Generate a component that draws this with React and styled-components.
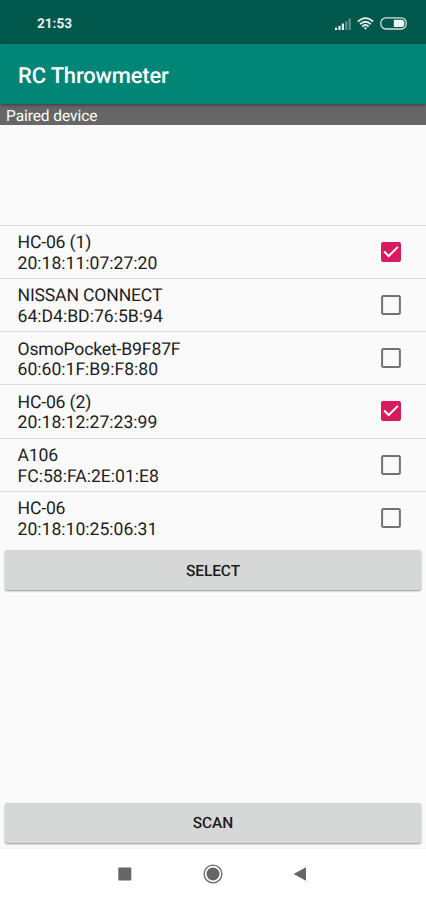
import React from 'react';
import styled, { createGlobalStyle } from 'styled-components';

const GlobalStyle = createGlobalStyle`
  * { box-sizing: border-box; }
  body {
    margin: 0;
    background: #fafafa;
    font-family: Roboto, sans-serif;
    text-rendering: geometricPrecision;
  }
`;

const Screen = styled.div`
  width: 426px;
  height: 900px;
  display: flex;
  flex-direction: column;
  overflow: hidden;
  background: #fafafa;
  color: #1d1d1d;
`;

const StatusBar = styled.header`
  height: 44px;
  flex: none;
  display: flex;
  align-items: center;
  justify-content: space-between;
  padding: 3px 19px 0 37px;
  background: #00574b;
  color: #e9f1f0;
`;

const Clock = styled.span`
  font-size: 13.6px;
  font-weight: 700;
  line-height: 16px;
`;

const StatusIcons = styled.div`
  display: flex;
  align-items: center;
  gap: 6px;
  svg { display: block; }
`;

const AppBar = styled.div`
  height: 60px;
  flex: none;
  display: flex;
  align-items: center;
  padding: 4px 18px 0;
  background: #008577;
  box-shadow: 0 1px 3px rgba(0, 0, 0, 0.45);
  z-index: 1;
`;

const Title = styled.h1`
  margin: 0;
  color: #fff;
  font-size: 22px;
  font-weight: 500;
  line-height: 27px;
  letter-spacing: -0.18px;
`;

const SectionLabel = styled.div`
  height: 21px;
  flex: none;
  padding: 3px 6px 0;
  background: #666;
  color: #fff;
  font-size: 15.5px;
  line-height: 18px;
  letter-spacing: -0.07px;
`;

const DeviceList = styled.ul`
  list-style: none;
  margin: 99.5px 0 0;
  padding: 0;
  flex: none;
`;

const DeviceRow = styled.li`
  height: 53.25px;
  display: flex;
  align-items: center;
  justify-content: space-between;
  padding: 0 25px 0 17.5px;
  border-top: 1px solid #dadada;
`;

const DeviceText = styled.div`
  font-size: 17.6px;
  line-height: 20.5px;
  padding-top: 4px;
`;

const DeviceName = styled.div`
  letter-spacing: -0.16px;
`;

const DeviceAddress = styled.div`
  letter-spacing: -0.01px;
`;

const CheckMark = styled.svg`
  display: block;
  flex: none;
`;

const Button = styled.button`
  height: 40px;
  flex: none;
  margin: ${({ $margin }) => $margin};
  padding: 1px 0 0;
  border: 0;
  border-radius: 2px;
  background: #d6d8d7;
  box-shadow: 0 1px 2px rgba(0, 0, 0, 0.4);
  color: #1b1b1b;
  font: 500 15.5px/20px Roboto, sans-serif;
  letter-spacing: -0.08px;
  text-rendering: inherit;
`;

const NavBar = styled.nav`
  height: 52px;
  flex: none;
  display: flex;
  justify-content: center;
  align-items: center;
  gap: 71px;
  padding-bottom: 1px;
  background: #fff;
  border-top: 1px solid #f3f3f3;
`;

const devices = [
  { name: 'HC-06 (1)', address: '20:18:11:07:27:20', checked: true },
  { name: 'NISSAN CONNECT', address: '64:D4:BD:76:5B:94' },
  { name: 'OsmoPocket-B9F87F', address: '60:60:1F:B9:F8:80' },
  { name: 'HC-06 (2)', address: '20:18:12:27:23:99', checked: true },
  { name: 'A106', address: 'FC:58:FA:2E:01:E8' },
  { name: 'HC-06', address: '20:18:10:25:06:31' },
];

function Checkbox({ checked }) {
  return (
    <CheckMark width="20" height="20" viewBox="0 0 20 20" role="checkbox" aria-checked={!!checked}>
      {checked ? (
        <>
          <rect width="20" height="20" rx="2" fill="#d81b60" />
          <path d="M3.1 9.5 7.7 14 16.9 4.9" fill="none" stroke="#fff" strokeWidth="2" />
        </>
      ) : (
        <rect x="1.1" y="1.1" width="17.8" height="17.8" rx="1.2" fill="none" stroke="#717171" strokeWidth="2" />
      )}
    </CheckMark>
  );
}

function SignalIcon() {
  return (
    <svg width="16" height="12" viewBox="0 0 16 12" fill="#e9f1f0">
      <rect x="0" y="9.6" width="2.2" height="2.4" />
      <rect x="3.4" y="7.8" width="2.2" height="4.2" />
      <rect x="6.8" y="5.5" width="2.2" height="6.5" />
      <rect x="10.2" y="3" width="2.2" height="9" opacity="0.4" />
      <rect x="13.6" y="0.4" width="2.2" height="11.6" opacity="0.4" />
    </svg>
  );
}

function WifiIcon() {
  return (
    <svg width="17" height="13" viewBox="0 0 17 13" fill="none" stroke="#e9f1f0" strokeWidth="1.8">
      <path d="M0.8 4.7Q8.5 -2.4 16.2 4.7" />
      <path d="M3.1 7.2Q8.5 2.3 13.9 7.2" />
      <path d="M5.3 9.5Q8.5 6.6 11.7 9.5" />
      <path d="M6.7 10.8Q8.5 9.5 10.3 10.8L8.5 12.8Z" fill="#e9f1f0" stroke="none" />
    </svg>
  );
}

function BatteryIcon() {
  return (
    <svg width="27" height="13" viewBox="0 0 27 13">
      <rect x="0.8" y="0.8" width="25.4" height="11.2" rx="5.2" fill="none" stroke="#d5e4e2" strokeWidth="1.3" />
      <path d="M13.8 2.8H21.2Q24.4 2.8 24.4 6.4T21.2 10H13.8Z" fill="#edf4f3" />
    </svg>
  );
}

export default function App() {
  return (
    <>
      <GlobalStyle />
      <Screen>
        <StatusBar>
          <Clock>21:53</Clock>
          <StatusIcons>
            <SignalIcon />
            <WifiIcon />
            <BatteryIcon />
          </StatusIcons>
        </StatusBar>
        <AppBar>
          <Title>RC Throwmeter</Title>
        </AppBar>
        <SectionLabel>Paired device</SectionLabel>
        <DeviceList>
          {devices.map((d) => (
            <DeviceRow key={d.address}>
              <DeviceText>
                <DeviceName>{d.name}</DeviceName>
                <DeviceAddress>{d.address}</DeviceAddress>
              </DeviceText>
              <Checkbox checked={d.checked} />
            </DeviceRow>
          ))}
        </DeviceList>
        <Button $margin="6px 5px 0">SELECT</Button>
        <Button $margin="auto 5px 5.5px">SCAN</Button>
        <NavBar>
          <svg width="14" height="14" viewBox="0 0 14 14"><rect x="0.3" y="0.5" width="13" height="13" rx="0.7" fill="#666" /></svg>
          <svg width="20" height="20" viewBox="0 0 20 20">
            <circle cx="10" cy="10" r="8.9" fill="none" stroke="#666" strokeWidth="1.3" />
            <circle cx="10" cy="10" r="6.5" fill="#666" />
          </svg>
          <svg width="14" height="14" viewBox="0 0 14 14" overflow="visible"><path d="M-0.4 7 12 0.2V13.8Z" fill="#666" /></svg>
        </NavBar>
      </Screen>
    </>
  );
}
